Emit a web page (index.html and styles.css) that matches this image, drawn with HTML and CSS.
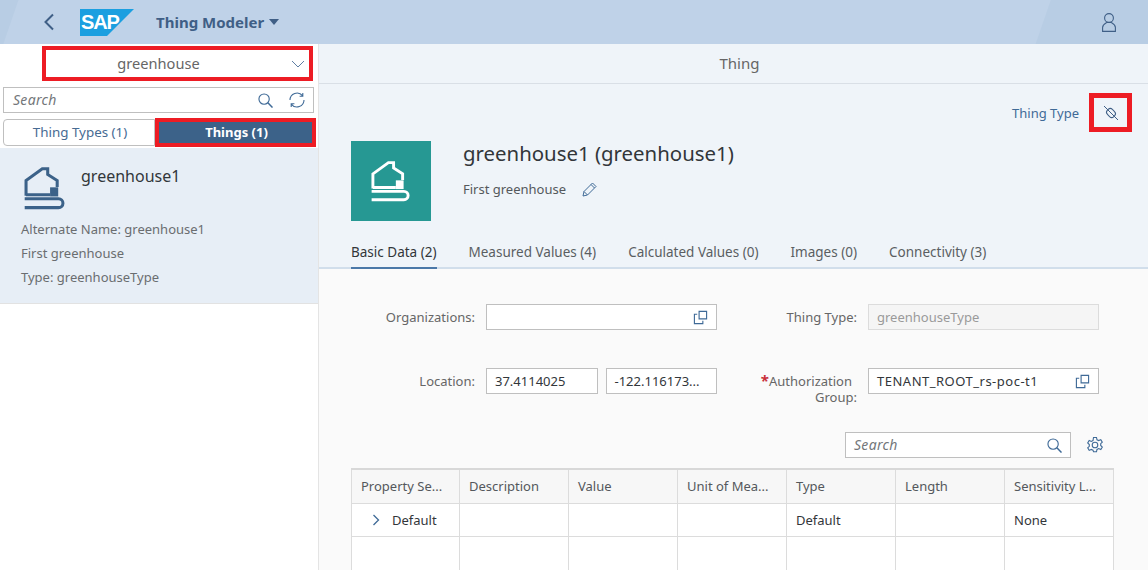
FILE: index.html
```html
<!DOCTYPE html>
<html lang="en">
<head>
    <meta charset="UTF-8">
    <meta name="viewport" content="width=device-width, initial-scale=1.0">
    <title>Thing Modeler</title>
    <link rel="stylesheet" href="styles.css">
</head>
<body>
    <svg class="sprites" width="0" height="0">
        <symbol id="house" viewBox="70 62 130 130">
            <path d="M79 150V105L127 70H143V87L171 105V124M79 147H150" fill="none" stroke="currentColor" stroke-width="9"/>
            <rect x="150" y="125" width="24" height="27" fill="currentColor"/>
            <path d="M75 159H175A13 13 0 0 1 175 185H75" fill="none" stroke="currentColor" stroke-width="9"/>
        </symbol>
        <symbol id="search" viewBox="0 0 16 16">
            <circle cx="6.500" cy="6.500" r="5.500" fill="none" stroke="currentColor" stroke-width="1.200"/>
            <path d="M10.500 10.500l5 5" stroke="currentColor" stroke-width="1.600"/>
        </symbol>
        <symbol id="copy" viewBox="0 0 16 16">
            <path d="M6.500 1.500h8v8h-8z M4.500 4.500h-3v10h9v-3" fill="none" stroke="currentColor" stroke-width="1.200"/>
        </symbol>
    </svg>

    <header class="shell">
        <svg class="back" width="12" height="18" viewBox="0 0 12 18"><path d="M10 1.500L2.500 9l7.500 7.500" fill="none" stroke="currentColor" stroke-width="2"/></svg>
        <div class="logo"><span>SAP</span></div>
        <div class="app-title">Thing Modeler <span class="caret"></span></div>
        <svg class="user" width="14" height="19" viewBox="0 0 14 19"><circle cx="7" cy="5" r="4.400" fill="none" stroke="currentColor" stroke-width="1.100"/><path d="M.6 18.400V14.500C.6 11.500 3 10.500 4.800 9.500H9.200C11 10.500 13.400 11.500 13.400 14.500V18.400Z" fill="none" stroke="currentColor" stroke-width="1.100"/></svg>
    </header>

    <main class="layout">
        <aside class="sidebar">
            <div class="package-row">
                <div class="package">
                    <span>greenhouse</span>
                    <svg class="package-arrow" width="14" height="8" viewBox="0 0 14 8"><path d="M1 1l6 6 6-6" fill="none" stroke="currentColor"/></svg>
                </div>
            </div>
            <div class="side-search">
                <span class="placeholder">Search</span>
                <svg class="icon search-icon" width="15" height="15"><use href="#search"/></svg>
                <svg class="icon" width="18" height="16" viewBox="0 0 18 16"><path d="M2 8a7 7 0 0 1 12.500-4.300M16 8a7 7 0 0 1-12.500 4.300M14.800 1v3.200h-3.200M3.200 15v-3.200h3.200" fill="none" stroke="currentColor" stroke-width="1.100"/></svg>
            </div>
            <div class="segments">
                <div class="segment">Thing Types (1)</div>
                <div class="segment segment-on">Things (1)</div>
            </div>
            <div class="thing-item">
                <div class="thing-top">
                    <svg class="thing-icon" width="44" height="44"><use href="#house"/></svg>
                    <div class="thing-name">greenhouse1</div>
                </div>
                <div class="thing-line">Alternate Name: greenhouse1</div>
                <div class="thing-line">First greenhouse</div>
                <div class="thing-line">Type: greenhouseType</div>
            </div>
        </aside>

        <section class="detail">
            <div class="page-title">Thing</div>
            <div class="object-header">
                <div class="actions">
                    <span class="link">Thing Type</span>
                    <div class="plug-box">
                        <svg width="16" height="16" viewBox="0 0 16 16"><rect x="3.500" y="4.500" width="9" height="7" rx="3" transform="rotate(45 8 8)" fill="none" stroke="currentColor"/><path d="M1 1l14 14" fill="none" stroke="currentColor"/></svg>
                    </div>
                </div>
                <div class="identity">
                    <div class="thing-image"><svg width="42" height="42"><use href="#house"/></svg></div>
                    <div>
                        <h1>greenhouse1 (greenhouse1)</h1>
                        <div class="subtitle">First greenhouse
                            <svg class="pencil" width="15" height="15" viewBox="0 0 15 15"><path d="M1 14l1-4.500L10.500 1 14 4.500 5.500 13zM2 9.500L5.500 13M9 2.500L12.500 6" fill="none" stroke="currentColor"/></svg>
                        </div>
                    </div>
                </div>
                <nav class="tabs">
                    <div class="tab tab-on">Basic Data (2)</div>
                    <div class="tab">Measured Values (4)</div>
                    <div class="tab">Calculated Values (0)</div>
                    <div class="tab">Images (0)</div>
                    <div class="tab">Connectivity (3)</div>
                </nav>
            </div>

            <div class="content">
                <div class="form">
                    <label class="form-label">Organizations:</label>
                    <div class="input"><svg class="icon input-icon" width="15" height="15"><use href="#copy"/></svg></div>
                    <label class="form-label">Thing Type:</label>
                    <div class="input input-off">greenhouseType</div>

                    <label class="form-label">Location:</label>
                    <div class="input-pair">
                        <div class="input">37.4114025</div>
                        <div class="input">-122.116173...</div>
                    </div>
                    <label class="form-label"><span class="required">*</span><span class="label-first">Authorization</span> Group:</label>
                    <div class="input"><span class="tenant">TENANT_ROOT_rs-poc-t1</span><svg class="icon input-icon" width="15" height="15"><use href="#copy"/></svg></div>
                </div>

                <div class="table-tools">
                    <div class="input table-search">
                        <span class="placeholder">Search</span>
                        <svg class="icon input-icon" width="15" height="15"><use href="#search"/></svg>
                    </div>
                    <svg class="icon" width="18" height="18" viewBox="0 0 18 18"><circle cx="9" cy="9" r="2.800" fill="none" stroke="currentColor" stroke-width="1.100"/><path d="M7.500 1.500h3l.5 2.300 1.700.8 2.100-1 1.500 2.500-1.600 1.600v1.800l1.600 1.600-1.500 2.500-2.100-1-1.700.8-.5 2.300h-3L7 14.200l-1.700-.8-2.100 1-1.500-2.500 1.600-1.600V8.500L1.700 6.900l1.500-2.500 2.100 1L7 4.600z" fill="none" stroke="currentColor" stroke-width="1.100"/></svg>
                </div>

                <table class="props">
                    <thead>
                        <tr>
                            <th>Property Se...</th><th>Description</th><th>Value</th><th>Unit of Mea...</th><th>Type</th><th>Length</th><th>Sensitivity L...</th>
                        </tr>
                    </thead>
                    <tbody>
                        <tr>
                            <td class="first-cell"><svg class="row-arrow" width="8" height="12" viewBox="0 0 8 12"><path d="M1.500 1l5 5-5 5" fill="none" stroke="currentColor" stroke-width="1.300"/></svg>Default</td>
                            <td></td><td></td><td></td><td>Default</td><td></td><td>None</td>
                        </tr>
                        <tr class="last-row"><td></td><td></td><td></td><td></td><td></td><td></td><td></td></tr>
                    </tbody>
                </table>
            </div>
        </section>
    </main>
</body>
</html>
```

FILE: styles.css
```css
* {
    box-sizing: border-box;
}

html, body {
    height: 100%;
}

body {
    margin: 0;
    overflow: hidden;
    font-family: "Noto Sans", Arial, sans-serif;
    font-size: 13px;
    color: #32363a;
    background-color: #fff;
}

.sprites {
    position: absolute;
}

.icon {
    color: #3f6a97;
    flex: none;
}

.placeholder {
    font-style: italic;
    font-size: 14px;
    letter-spacing: 0.3px;
    color: #74777a;
    padding-bottom: 1px;
}

/* shell bar */
.shell {
    height: 44px;
    display: flex;
    align-items: center;
    padding-left: 43px;
    padding-right: 32px;
    color: #3f5f86;
    background: linear-gradient(109deg, #b8cde4 17px, #bfd2e8 18px, #bfd2e8 993px, #b8cde4 994px);
}

.back {
    margin-right: 25px;
}

.logo {
    width: 54px;
    height: 27px;
    margin-top: 1px;
    background: #1b9fe0;
    clip-path: polygon(0 0, 100% 0, 50% 100%, 0 100%);
    color: #fff;
    font-family: "Liberation Sans", Arial, sans-serif;
    font-weight: bold;
    font-size: 20px;
    line-height: 27px;
    letter-spacing: -1.2px;
    padding-left: 1px;
}

.app-title {
    margin-left: 22px;
    padding-bottom: 1px;
    font-size: 15px;
    font-weight: bold;
    display: flex;
    align-items: center;
    gap: 5px;
    flex: 1;
}

.caret {
    width: 0;
    height: 0;
    border-left: 5px solid transparent;
    border-right: 5px solid transparent;
    border-top: 6px solid #3f5f86;
}

/* page layout */
.layout {
    display: flex;
    height: 526px;
}

.sidebar {
    width: 319px;
    flex: none;
    border-right: 1px solid #e4e4e4;
}

.package-row {
    height: 40px;
    padding: 2px 5px 0 42px;
}

.package {
    height: 35px;
    border: 4px solid #ed1c24;
    display: flex;
    align-items: center;
    justify-content: center;
    position: relative;
    padding: 0 38px 2px 0;
    font-size: 14.6px;
    color: #666;
}

.package-arrow {
    position: absolute;
    right: 4px;
    top: 10px;
    color: #5f7ea3;
}

.side-search {
    margin: 3px 4px 0 3px;
    height: 26px;
    border: 1px solid #bfbfbf;
    display: flex;
    align-items: center;
    padding: 0 7px 0 9px;
    gap: 15px;
}

.side-search .placeholder {
    flex: 1;
}

.segments {
    display: flex;
    margin: 5px 2px 0 3px;
    height: 29px;
}

.segment {
    flex: 1;
    border: 1px solid #bfbfbf;
    border-radius: 4px 0 0 4px;
    padding: 0 0 1px 2px;
    font-size: 13.4px;
    color: #476b93;
    display: flex;
    align-items: center;
    justify-content: center;
    margin: 1px 0;
}

.segment-on {
    flex: none;
    width: 161px;
    margin: 0;
    border: 4px solid #ed1c24;
    border-radius: 0;
    font-size: 13px;
    background-color: #3c6289;
    color: #fff;
    font-weight: bold;
}

.thing-item {
    margin-top: 1px;
    height: 156px;
    padding: 9px 21px 0;
    background-color: #e7eef6;
    border-bottom: 1px solid #e2e2e2;
}

.thing-top {
    display: flex;
    height: 60px;
}

.thing-icon {
    color: #3c6289;
    margin: 9px 14px 0 2px;
}

.thing-name {
    font-size: 16px;
    line-height: 38px;
}

.thing-line {
    height: 24px;
    line-height: 24px;
    color: #6a6d70;
}

/* detail side */
.detail {
    flex: 1;
    min-width: 0;
    background-color: #fafafa;
}

.page-title {
    height: 40px;
    line-height: 39px;
    padding-left: 12px;
    text-align: center;
    font-size: 15px;
    color: #666;
    background-color: #eff4f9;
    border-bottom: 1px solid #d9dfe6;
}

.object-header {
    height: 185px;
    padding: 9px 0 0 32px;
    background-color: #eff4f9;
    border-bottom: 2px solid #d1deeb;
}

.actions {
    display: flex;
    justify-content: flex-end;
    align-items: center;
    gap: 10px;
    height: 39px;
    padding-right: 16px;
}

.link {
    color: #3f6a97;
}

.plug-box {
    width: 43px;
    height: 39px;
    border: 5px solid #ed1c24;
    color: #3f5f86;
    display: flex;
    align-items: center;
    justify-content: center;
}

.identity {
    display: flex;
    gap: 32px;
    margin-top: 9px;
}

.thing-image {
    width: 80px;
    height: 80px;
    background-color: #269893;
    color: #fff;
    display: flex;
    align-items: center;
    justify-content: center;
}

h1 {
    margin: 0;
    font-size: 20.4px;
    font-weight: normal;
    line-height: 25px;
}

.subtitle {
    margin-top: 13px;
    line-height: 20px;
    color: #54585c;
    display: flex;
    align-items: center;
    gap: 16px;
}

.pencil {
    color: #3f6a97;
}

.tabs {
    display: flex;
    gap: 32px;
    margin-top: 20px;
}

.tab {
    height: 28px;
    line-height: 22px;
    font-size: 13.5px;
    color: #5a5e62;
}

.tab-on {
    color: #32363a;
    border-bottom: 2px solid #4a78a8;
}

.content {
    padding: 35px 0 0 32px;
}

.form {
    display: grid;
    grid-template-columns: 124px 231px 129px 231px;
    grid-auto-rows: 26px;
    column-gap: 11px;
    row-gap: 38px;
}

.form-label {
    text-align: right;
    line-height: 16px;
    padding-top: 5px;
    color: #666;
}

.label-first {
    margin-right: 5px;
}

.required {
    color: #c9303c;
    font-weight: bold;
    font-size: 15px;
    line-height: 14px;
}

.input {
    height: 26px;
    border: 1px solid #bfbfbf;
    background-color: #fff;
    display: flex;
    align-items: center;
    justify-content: space-between;
    padding: 0 8px;
    min-width: 0;
}

.input-icon {
    margin-left: auto;
}

.input-off {
    background-color: #f5f5f5;
    border-color: #dcdcdc;
    color: #9a9a9a;
}

.tenant {
    letter-spacing: 0.5px;
}

.input-pair {
    display: flex;
    gap: 8px;
}

.input-pair .input {
    flex: 1;
}

.table-tools {
    display: flex;
    justify-content: flex-end;
    align-items: center;
    gap: 15px;
    width: 763px;
    padding-right: 10px;
    margin-top: 38px;
    margin-bottom: 10px;
}

.table-search {
    width: 226px;
}

.props {
    border-collapse: collapse;
    table-layout: fixed;
    width: 763px;
    border-top: 2px solid #d8d8d8;
}

.props th, .props td {
    border: 1px solid #dcdcdc;
    padding: 0 9px;
    text-align: left;
    font-weight: normal;
    white-space: nowrap;
    overflow: hidden;
    background-color: #fff;
}

.props th {
    height: 34px;
    background-color: #f7f7f7;
    color: #54585c;
}

.props th:first-child {
    width: 108px;
}

.props td {
    height: 33px;
}

.props .last-row td {
    height: 40px;
}

.props .first-cell {
    padding-left: 20px;
}

.row-arrow {
    color: #3f6a97;
    margin-right: 12px;
    vertical-align: -1px;
}
```
